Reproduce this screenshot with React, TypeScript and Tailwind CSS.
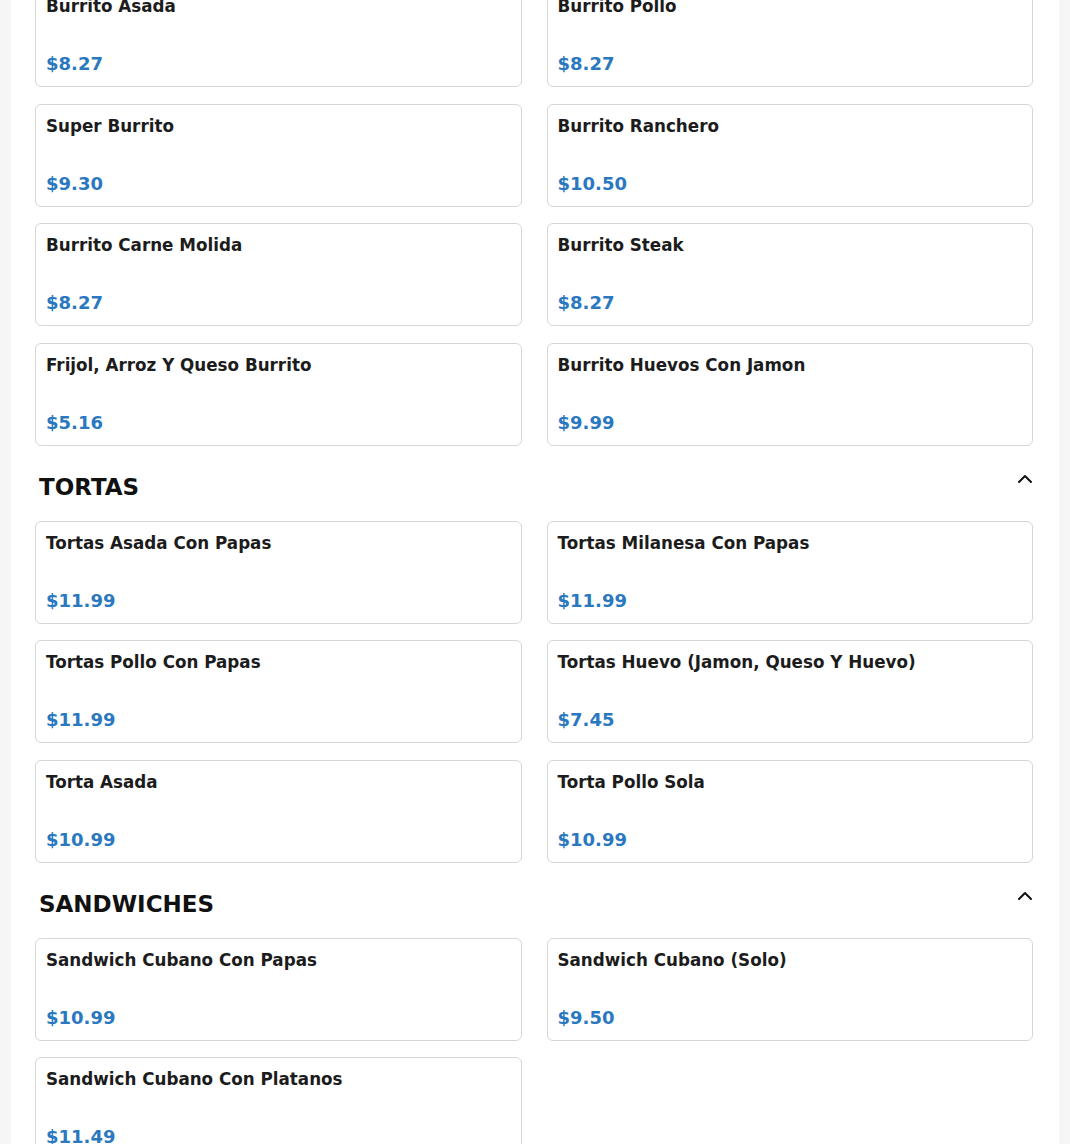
import { ChevronUp } from "lucide-react";

interface MenuItem {
  name: string;
  price: string;
}

interface MenuSection {
  title?: string;
  items: MenuItem[];
}

const sections: MenuSection[] = [
  {
    items: [
      { name: "Burrito Asada", price: "$8.27" },
      { name: "Burrito Pollo", price: "$8.27" },
      { name: "Super Burrito", price: "$9.30" },
      { name: "Burrito Ranchero", price: "$10.50" },
      { name: "Burrito Carne Molida", price: "$8.27" },
      { name: "Burrito Steak", price: "$8.27" },
      { name: "Frijol, Arroz Y Queso Burrito", price: "$5.16" },
      { name: "Burrito Huevos Con Jamon", price: "$9.99" },
    ],
  },
  {
    title: "TORTAS",
    items: [
      { name: "Tortas Asada Con Papas", price: "$11.99" },
      { name: "Tortas Milanesa Con Papas", price: "$11.99" },
      { name: "Tortas Pollo Con Papas", price: "$11.99" },
      { name: "Tortas Huevo (Jamon, Queso Y Huevo)", price: "$7.45" },
      { name: "Torta Asada", price: "$10.99" },
      { name: "Torta Pollo Sola", price: "$10.99" },
    ],
  },
  {
    title: "SANDWICHES",
    items: [
      { name: "Sandwich Cubano Con Papas", price: "$10.99" },
      { name: "Sandwich Cubano (Solo)", price: "$9.50" },
      { name: "Sandwich Cubano Con Platanos", price: "$11.49" },
    ],
  },
];

function ItemCard({ item }: { item: MenuItem }) {
  return (
    <div className="flex h-[103px] flex-col justify-between rounded-md border border-[#d6d6d6] bg-white px-[10px] pt-[11px] pb-[11px]">
      <div className="text-[16.75px] font-bold leading-[1.2] text-[#1c1c1c]">{item.name}</div>
      <div className="text-[18px] font-bold leading-[1.2] text-[#2a78c0]">{item.price}</div>
    </div>
  );
}

export default function App() {
  return (
    <div
      className="min-h-screen bg-[#f6f6f6] px-[11px]"
      style={{ fontFamily: '"DejaVu Sans", sans-serif' }}
    >
      <div className="min-h-screen bg-white pl-[24px] pr-[26px] pb-10">
        {sections.map((section, i) => (
          <div key={i} className={i === 0 ? "-mt-[16px]" : ""}>
            {section.title && (
              <div className="mt-[25px] mb-[17px] flex items-start justify-between pl-1">
                <h2 className="text-[23px] font-bold leading-[33px] text-[#111]">{section.title}</h2>
                <button className="-mt-[4px] -mr-1 text-[#111]">
                  <ChevronUp size={24} strokeWidth={2} />
                </button>
              </div>
            )}
            <div className="grid grid-cols-2 gap-x-[25px] gap-y-[16.5px]">
              {section.items.map((item) => (
                <ItemCard key={item.name} item={item} />
              ))}
            </div>
          </div>
        ))}
      </div>
    </div>
  );
}
